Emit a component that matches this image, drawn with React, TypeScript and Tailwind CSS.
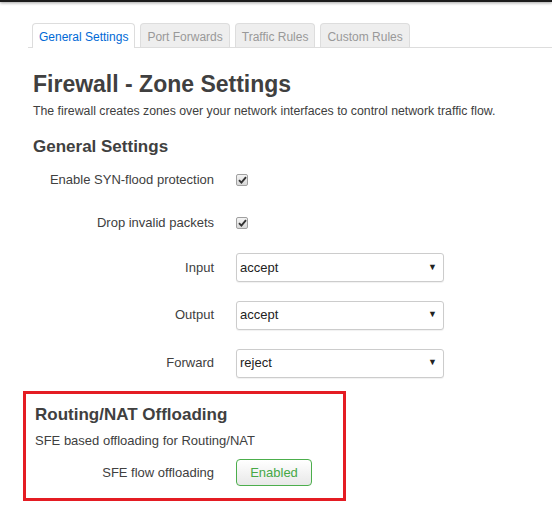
import React from 'react';

const tabs = ['General Settings', 'Port Forwards', 'Traffic Rules', 'Custom Rules'];

const Checkbox: React.FC = () => (
  <div className="flex h-[12px] w-[12px] items-center justify-center rounded-[2px] border border-[#a0a0a0] bg-gradient-to-b from-[#f4f4f4] to-[#d8d8d8]">
    <svg width="9" height="8" viewBox="0 0 9 8">
      <path d="M1 4.2 L3.4 6.6 L8 1.2" fill="none" stroke="#333" strokeWidth="1.9" />
    </svg>
  </div>
);

const Select: React.FC<{ value: string }> = ({ value }) => (
  <div className="flex h-[29px] w-[208px] items-center justify-between rounded-[3px] border border-[#ccc] bg-white pl-[3px] pr-[6px] text-[13px] text-[#222] shadow-[0_1px_1px_rgba(0,0,0,0.06)]">
    <span>{value}</span>
    <span className="text-[9px] text-[#222]">▼</span>
  </div>
);

const Row: React.FC<{ label: string; h: string; children: React.ReactNode }> = ({ label, h, children }) => (
  <div className={`flex items-center ${h}`}>
    <div className="w-[181px] text-right text-[13px]">{label}</div>
    <div className="ml-[22px]">{children}</div>
  </div>
);

export default function App() {
  return (
    <div className="min-h-[507px] w-[552px] bg-white text-[#404040]" style={{ fontFamily: '"Liberation Sans", Arial, sans-serif' }}>
      <div className="h-[2px] bg-[#1c1c1c] shadow-[0_1px_3px_rgba(0,0,0,0.45)]" />
      <div className="pl-[28px]">
        <div className="mt-[21px] flex gap-[5px] border-b border-[#ddd] pl-[4px]">
          {tabs.map((t, i) => (
            <div
              key={t}
              className={
                i === 0
                  ? '-mb-px flex h-[25px] items-center rounded-t-[4px] border border-b-0 border-[#ddd] bg-white px-[6px] pt-[2px] text-[12px] text-[#0069d6]'
                  : 'flex h-[24px] items-center rounded-t-[4px] border border-b-0 border-[#ddd] bg-[#eee] px-[6px] pt-[2px] text-[12px] text-[#999]'
              }
            >
              {t}
            </div>
          ))}
        </div>
        <div className="pl-[5px]">
          <h1 className="mt-[22px] text-[23px] font-bold leading-[28px]">Firewall - Zone Settings</h1>
          <p className="mt-[5px] text-[12.3px] leading-[16px]">
            The firewall creates zones over your network interfaces to control network traffic flow.
          </p>
          <h2 className="mt-[18px] text-[17px] font-bold leading-[20px]">General Settings</h2>
          <div className="mt-[1px]">
            <Row label="Enable SYN-flood protection" h="h-[43px]">
              <Checkbox />
            </Row>
            <Row label="Drop invalid packets" h="h-[43px]">
              <Checkbox />
            </Row>
            <Row label="Input" h="h-[47px]">
              <Select value="accept" />
            </Row>
            <Row label="Output" h="h-[48px]">
              <Select value="accept" />
            </Row>
            <Row label="Forward" h="h-[48px]">
              <Select value="reject" />
            </Row>
          </div>
          <div className="ml-[-10px] mt-[4px] w-[323px] border-[3px] border-[#e41c23] pb-[12px] pl-[9px] pt-[11px]">
            <h2 className="text-[17px] font-bold leading-[20px]">Routing/NAT Offloading</h2>
            <p className="mt-[8px] text-[13px] leading-[16px]">SFE based offloading for Routing/NAT</p>
            <div className="mt-[10px] flex items-center">
              <div className="w-[179px] text-right text-[13px]">SFE flow offloading</div>
              <div className="ml-[22px] flex h-[27px] w-[76px] items-center justify-center rounded-[4px] border border-[#4cae4c] bg-gradient-to-b from-white to-[#e8e8e8] text-[13px] text-[#46a846]">
                Enabled
              </div>
            </div>
          </div>
        </div>
      </div>
    </div>
  );
}
